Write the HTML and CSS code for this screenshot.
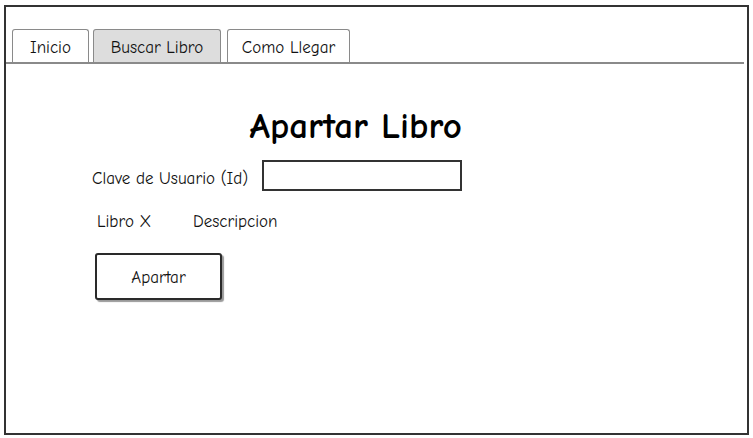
FILE: index.html
```html
<!DOCTYPE html>
<html lang="es">
<head>
<meta charset="utf-8">
<title>Apartar Libro</title>
<link rel="stylesheet" href="styles.css">
</head>
<body>
<div class="frame">
  <div class="tabs">
    <div class="tab tab-inicio">Inicio</div>
    <div class="tab tab-buscar active">Buscar Libro</div>
    <div class="tab tab-como">Como Llegar</div>
  </div>
  <div class="tab-line"></div>
  <div class="form">
    <h1 class="title">Apartar Libro</h1>
    <div class="row-id">
      <label class="label">Clave de Usuario (Id)</label>
      <div class="input"></div>
    </div>
    <div class="row-book">
      <span class="book">Libro X</span>
      <span class="desc">Descripcion</span>
    </div>
    <div class="button">Apartar</div>
  </div>
</div>
</body>
</html>
```
FILE: styles.css
```css
html, body {
  margin: 0;
  padding: 0;
  background: #ffffff;
}
body {
  font-family: "Comic Sans MS", "Comic Neue", "DejaVu Sans", sans-serif;
  color: #111;
}
.frame {
  box-sizing: border-box;
  width: 745px;
  height: 430px;
  margin: 5px 0 0 4px;
  border: 2px solid #333;
  background: #fff;
}
.tabs {
  display: flex;
  align-items: flex-end;
  padding: 22px 0 0 6px;
  height: 33px;
}
.tab {
  box-sizing: border-box;
  height: 33px;
  border: 1px solid #8a8a8a;
  border-bottom: none;
  border-radius: 3px 3px 0 0;
  display: flex;
  align-items: center;
  justify-content: center;
  font-size: 17px;
  padding-top: 3px;
  background: #fff;
}
.tab-inicio { width: 77px; }
.tab-buscar { width: 128px; margin-left: 4px; }
.tab-como { width: 123px; margin-left: 6px; }
.tab.active { background: #dddddd; }
.tab-line {
  height: 2px;
  background: #8a8a8a;
  margin-right: 3px;
}
.form {
  width: 370px;
  margin-left: 86px;
}
.title {
  margin: 40px 0 0 0;
  text-align: right;
  font-size: 37px;
  font-weight: bold;
  line-height: 44px;
  color: #000;
}
.row-id {
  display: flex;
  align-items: center;
  justify-content: space-between;
  margin-top: 12px;
}
.label {
  font-size: 17px;
  padding-top: 5px;
}
.input {
  box-sizing: border-box;
  width: 200px;
  height: 31px;
  border: 2px solid #333;
  background: #fff;
}
.row-book {
  display: flex;
  margin-top: 20px;
  padding-left: 5px;
  font-size: 17px;
  line-height: 22px;
}
.book { width: 96px; }
.button {
  box-sizing: border-box;
  width: 127px;
  height: 47px;
  margin: 20px 0 0 3px;
  border: 2px solid #2a2a2a;
  border-radius: 3px;
  box-shadow: 2px 2px 1px #9a9a9a;
  display: flex;
  align-items: center;
  justify-content: center;
  font-size: 17px;
  padding-top: 2px;
  background: #fff;
}
```
